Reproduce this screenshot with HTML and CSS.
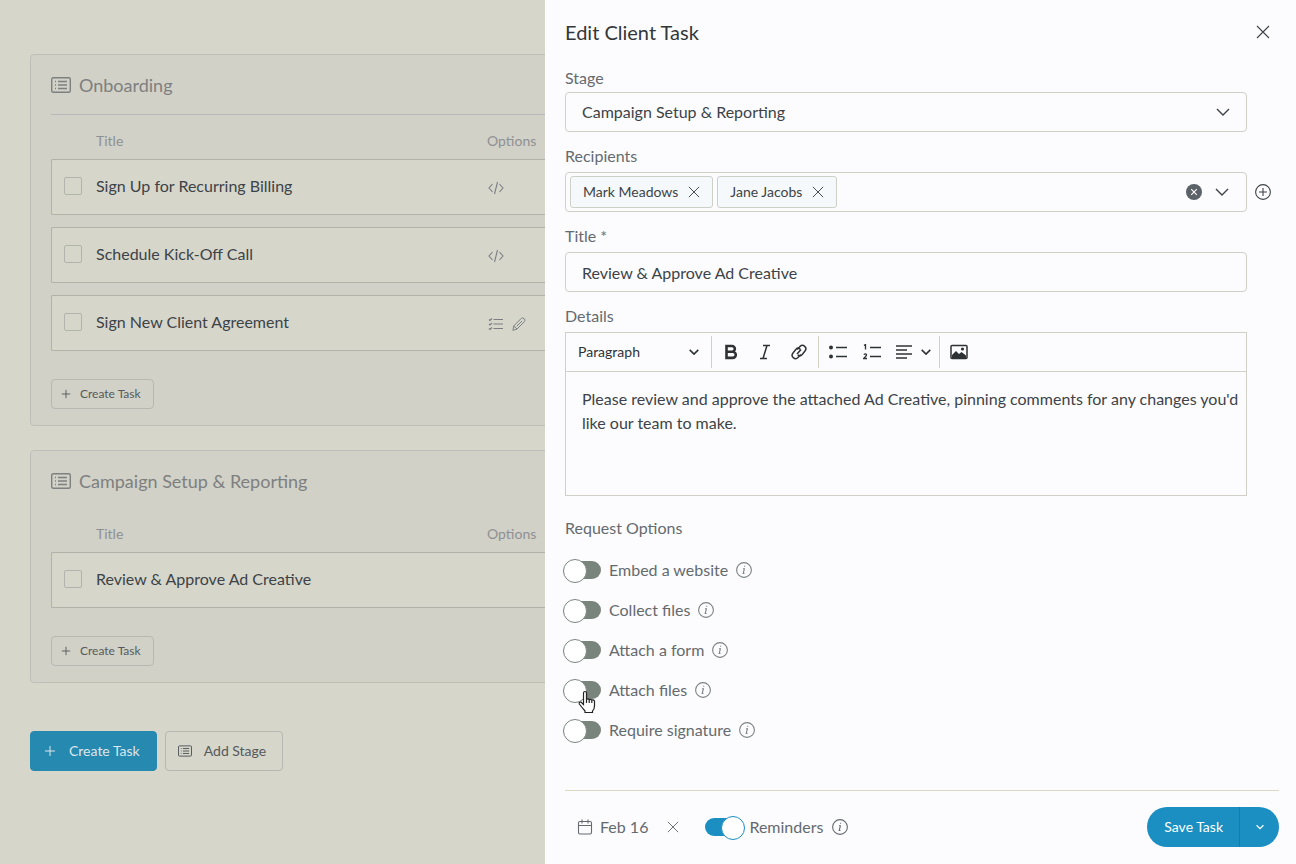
FILE: index.html
```html
<!DOCTYPE html>
<html lang="en">
<head>
    <meta charset="UTF-8">
    <meta name="viewport" content="width=device-width, initial-scale=1">
    <title>Edit Client Task</title>
    <link rel="stylesheet" href="styles.css">
</head>
<body>
<!-- shared icons -->
<svg class="sprite" aria-hidden="true">
    <symbol id="i-list" viewBox="0 0 20 16"><rect x="0.7" y="0.7" width="18.6" height="14.6" rx="1.5"/><path d="M4 4.5h1M7 4.5h9M4 8h1M7 8h9M4 11.5h1M7 11.5h9"/></symbol>
    <symbol id="i-code" viewBox="0 0 16 14"><path d="M4.5 3L1 7l3.500 4M11.500 3L15 7l-3.500 4M9.500 1l-3 12"/></symbol>
    <symbol id="i-checks" viewBox="0 0 16 14"><path d="M5.500 2.500H15M5.500 7H15M5.500 11.500H15M1 2.500l1 1 2-2M1 7l1 1 2-2M1 11.500l1 1 2-2"/></symbol>
    <symbol id="i-pen" viewBox="0 0 16 16"><path d="M1 15.200l1-5 8.500-8.500q1.700-1.400 3.500.2q1.600 1.700.2 3.400l-8.500 8.500zM2 10.200l3.700 3.600M11.500 4.500l-6 6"/></symbol>
    <symbol id="i-plus" viewBox="0 0 12 12"><path d="M6 1v10M1 6h10"/></symbol>
    <symbol id="i-x" viewBox="0 0 14 14"><path d="M1 1l12 12M13 1L1 13"/></symbol>
    <symbol id="i-down" viewBox="0 0 14 8"><path d="M1 1l6 6 6-6"/></symbol>
    <symbol id="i-info" viewBox="0 0 16 16"><circle cx="8" cy="8" r="7.400"/><path d="M7 6.800h1.400l-1.200 4.700h1.300M8.700 3.800v1"/></symbol>
</svg>

<main class="page">
    <section class="stage">
        <h2 class="stage-head"><svg class="icon icon-list"><use href="#i-list"/></svg>Onboarding</h2>
        <table class="tasks">
            <thead>
                <tr><th class="col-check"></th><th class="col-title">Title</th><th>Options</th></tr>
            </thead>
            <tbody>
                <tr>
                    <td><input class="check" type="checkbox" aria-label="Sign Up for Recurring Billing"></td>
                    <td>Sign Up for Recurring Billing</td>
                    <td><svg class="icon icon-opt"><use href="#i-code"/></svg></td>
                </tr>
                <tr>
                    <td><input class="check" type="checkbox" aria-label="Schedule Kick-Off Call"></td>
                    <td>Schedule Kick-Off Call</td>
                    <td><svg class="icon icon-opt"><use href="#i-code"/></svg></td>
                </tr>
                <tr>
                    <td><input class="check" type="checkbox" aria-label="Sign New Client Agreement"></td>
                    <td>Sign New Client Agreement</td>
                    <td><svg class="icon icon-opt"><use href="#i-checks"/></svg><svg class="icon icon-opt"><use href="#i-pen"/></svg></td>
                </tr>
            </tbody>
        </table>
        <button class="btn btn-small" type="button"><svg class="icon icon-plus"><use href="#i-plus"/></svg>Create Task</button>
    </section>

    <section class="stage stage-plain">
        <h2 class="stage-head"><svg class="icon icon-list"><use href="#i-list"/></svg>Campaign Setup &amp; Reporting</h2>
        <table class="tasks">
            <thead>
                <tr><th class="col-check"></th><th class="col-title">Title</th><th>Options</th></tr>
            </thead>
            <tbody>
                <tr>
                    <td><input class="check" type="checkbox" aria-label="Review and Approve Ad Creative"></td>
                    <td>Review &amp; Approve Ad Creative</td>
                    <td></td>
                </tr>
            </tbody>
        </table>
        <button class="btn btn-small" type="button"><svg class="icon icon-plus"><use href="#i-plus"/></svg>Create Task</button>
    </section>

    <div class="page-actions">
        <button class="btn btn-primary" type="button"><svg class="icon icon-stage"><use href="#i-plus"/></svg>Create Task</button>
        <button class="btn" type="button"><svg class="icon icon-stage"><use href="#i-list"/></svg>Add Stage</button>
    </div>
</main>

<form class="drawer">
    <header class="drawer-head">
        <h1>Edit Client Task</h1>
        <button class="icon-btn" type="button" aria-label="Close"><svg class="icon icon-x"><use href="#i-x"/></svg></button>
    </header>

    <div class="drawer-body">
        <label class="label" for="stage">Stage</label>
        <div class="row">
            <div class="select-wrap">
                <select class="input" id="stage">
                    <option>Campaign Setup &amp; Reporting</option>
                    <option>Onboarding</option>
                </select>
                <svg class="icon icon-down"><use href="#i-down"/></svg>
            </div>
        </div>

        <span class="label" id="rec-label">Recipients</span>
        <div class="row">
            <div class="tags" role="group" aria-labelledby="rec-label">
                <span class="tag">Mark Meadows<button class="icon-btn" type="button" aria-label="Remove Mark Meadows"><svg class="icon icon-tag-x"><use href="#i-x"/></svg></button></span>
                <span class="tag">Jane Jacobs<button class="icon-btn" type="button" aria-label="Remove Jane Jacobs"><svg class="icon icon-tag-x"><use href="#i-x"/></svg></button></span>
                <button class="icon-btn tags-clear" type="button" aria-label="Clear recipients">
                    <svg class="icon icon-16" viewBox="0 0 16 16"><circle class="disc" cx="8" cy="8" r="8"/><path class="cross" d="M5.200 5.200l5.600 5.600M10.800 5.200l-5.600 5.600"/></svg>
                </button>
                <button class="icon-btn" type="button" aria-label="Show recipients"><svg class="icon icon-down"><use href="#i-down"/></svg></button>
            </div>
            <button class="icon-btn" type="button" aria-label="Add recipient">
                <svg class="icon icon-16" viewBox="0 0 16 16"><circle cx="8" cy="8" r="7.400"/><path d="M8 4v8M4 8h8"/></svg>
            </button>
        </div>

        <label class="label" for="title">Title *</label>
        <div class="row">
            <input class="input" id="title" type="text" value="Review &amp; Approve Ad Creative">
        </div>

        <label class="label" for="details">Details</label>
        <div class="row">
            <div class="editor">
                <div class="toolbar">
                    <div class="tool-group">
                        <div class="select-wrap">
                            <select class="format" aria-label="Text style">
                                <option>Paragraph</option>
                                <option>Heading</option>
                            </select>
                            <svg class="icon icon-caret"><use href="#i-down"/></svg>
                        </div>
                    </div>
                    <div class="tool-group">
                        <button class="tool" type="button" aria-label="Bold"><svg viewBox="0 0 16 16"><path class="thick" d="M3.500 2h5.500a2.800 2.800 0 0 1 0 5.700H3.500zM3.500 7.700h6.200a3.100 3.100 0 0 1 0 6.200H3.500z"/></svg></button>
                        <button class="tool" type="button" aria-label="Italic"><svg viewBox="0 0 16 16"><path d="M6 1.500h7M3 14.500h7M10 1.500l-4 13"/></svg></button>
                        <button class="tool" type="button" aria-label="Link"><svg viewBox="0 0 16 16"><path d="M6 5.500l3-3a3.400 3.400 0 0 1 5 4.600l-3 3.600a3 3 0 0 1-4.200.2M10 10.500l-3 3a3.400 3.400 0 0 1-5-4.600l3-3.600a3 3 0 0 1 4.200-.2M6 10l4-4.500"/></svg></button>
                    </div>
                    <div class="tool-group">
                        <button class="tool" type="button" aria-label="Bulleted list"><svg viewBox="0 0 18 16"><path d="M7 3.500h11M7 12.500h11"/><circle class="dot" cx="2" cy="3.500" r="2"/><circle class="dot" cx="2" cy="12.500" r="2"/></svg></button>
                        <button class="tool" type="button" aria-label="Numbered list"><svg viewBox="0 0 18 16"><path d="M7 3.500h11M7 12.500h11"/><path class="fine" d="M1 1.500l1.500-1v5M.700 10.500q2.500-1.500 2.800.2q0 1-2.800 3.800h3.300"/></svg></button>
                        <button class="tool tool-wide" type="button" aria-label="Alignment"><svg viewBox="0 0 16 16"><path d="M0 2h16M0 6h11M0 10h16M0 14h11"/></svg><svg class="icon icon-caret"><use href="#i-down"/></svg></button>
                    </div>
                    <div class="tool-group">
                        <button class="tool" type="button" aria-label="Image"><svg viewBox="0 0 18 16"><rect x="1" y="1.500" width="16" height="13" rx="1"/><path class="dot" d="M2 13v-2l4-4 3 3 2.500-2 4.500 3.500V14H2z"/><circle class="dot" cx="12.500" cy="5" r="1.600"/></svg></button>
                    </div>
                </div>
                <textarea class="editor-text" id="details">Please review and approve the attached Ad Creative, pinning comments for any changes you'd like our team to make.</textarea>
            </div>
        </div>

        <fieldset class="options">
            <legend>Request Options</legend>
            <div class="option">
                <label class="switch-label"><input class="switch" type="checkbox">Embed a website</label>
                <svg class="icon icon-16"><use href="#i-info"/></svg>
            </div>
            <div class="option">
                <label class="switch-label"><input class="switch" type="checkbox">Collect files</label>
                <svg class="icon icon-16"><use href="#i-info"/></svg>
            </div>
            <div class="option">
                <label class="switch-label"><input class="switch" type="checkbox">Attach a form</label>
                <svg class="icon icon-16"><use href="#i-info"/></svg>
            </div>
            <div class="option">
                <label class="switch-label"><input class="switch" type="checkbox">Attach files</label>
                <svg class="icon icon-16"><use href="#i-info"/></svg>
                <svg class="pointer" viewBox="0 0 18 23" aria-hidden="true"><path d="M5.500 14V2.500a1.500 1.500 0 0 1 3 0V9q1.300-1.300 2.700.2q1.300-1 2.600.4q1.700-.8 2.700.9V15q0 4-2 5.500V22H7v-1.500Q4 17 1.300 13.500q-.6-2.300 1.700-1.900zM8.500 9v3.500M11.200 9.500v3M13.800 10v2.500"/></svg>
            </div>
            <div class="option">
                <label class="switch-label"><input class="switch" type="checkbox">Require signature</label>
                <svg class="icon icon-16"><use href="#i-info"/></svg>
            </div>
        </fieldset>
    </div>

    <footer class="drawer-foot">
        <button class="date" type="button">
            <svg class="icon icon-16" viewBox="0 0 16 16"><rect x="1.500" y="2.500" width="13" height="12.500" rx="1.500"/><path d="M1.500 6.500h13M5 .500v4M11 .500v4"/></svg>Feb 16
        </button>
        <button class="icon-btn date-clear" type="button" aria-label="Clear date"><svg class="icon icon-tag-x"><use href="#i-x"/></svg></button>
        <label class="switch-label"><input class="switch" type="checkbox" checked>Reminders</label>
        <svg class="icon icon-16"><use href="#i-info"/></svg>
        <div class="save">
            <button class="save-main" type="submit">Save Task</button>
            <button class="icon-btn save-more" type="button" aria-label="More save options"><svg class="icon icon-caret"><use href="#i-down"/></svg></button>
        </div>
    </footer>
</form>
</body>
</html>
```

FILE: styles.css
```css
*{
    box-sizing:border-box;
}
body{
    margin:0;
    min-height:100vh;
    font-family:Lato, "Liberation Sans", sans-serif;
    font-size:16px;
    line-height:24px;
    color:#3d4347;
    background:#d6d6cb;
}
button, input, select, textarea{
    margin:0;
    font:inherit;
    color:inherit;
}
button{
    padding:0;
    border:0;
    background:none;
    cursor:pointer;
}
.sprite{
    position:absolute;
    width:0;
    height:0;
}

/* icons */
.icon{
    flex:none;
    fill:none;
    stroke:currentColor;
    stroke-width:1.1;
}
.icon-list{
    width:20px;
    height:16px;
    stroke-width:1.4;
}
.icon-opt{
    width:16px;
    height:14px;
    margin:0 6px 0 1px;
    vertical-align:middle;
    color:#7c7e84;
}
.icon-plus{
    width:10px;
    height:10px;
}
.icon-stage{
    width:14px;
    height:12px;
    stroke-width:1.4;
}
.icon-16{
    width:16px;
    height:16px;
}
.icon-x{
    width:14px;
    height:14px;
}
.icon-tag-x{
    width:12px;
    height:12px;
}
.icon-down{
    width:14px;
    height:8px;
    stroke-width:1.4;
}
.icon-caret{
    width:10px;
    height:6px;
    stroke-width:2.2;
}
.disc{
    fill:#5b6268;
    stroke:none;
}
.cross{
    stroke:#fff;
}
.icon-btn{
    display:flex;
    align-items:center;
    justify-content:center;
}

/* page behind the drawer */
.page{
    padding:54px 30px;
}
.stage{
    margin-bottom:24px;
    padding:0 20px 16px;
    border:1px solid #bfbfba;
    border-radius:4px;
    background:#d1d1c7;
}
.stage-head{
    display:flex;
    align-items:center;
    gap:8px;
    height:60px;
    margin:0;
    border-bottom:1px solid #b8b8bc;
    font-size:18px;
    font-weight:400;
    color:#7e8080;
}
.stage-plain .stage-head{
    border-bottom-color:transparent;
}
.tasks{
    width:100%;
    table-layout:fixed;
    border-collapse:separate;
    border-spacing:0 12px;
}
.tasks th{
    padding:8px 0 0;
    font-size:14px;
    font-weight:400;
    line-height:12px;
    text-align:left;
    color:#8f9094;
}
.stage-plain .tasks th{
    padding-top:5px;
}
.tasks .col-check{
    width:45px;
}
.tasks .col-title{
    width:391px;
}
.tasks td{
    height:56px;
    padding:0 0 2px;
    border:solid #b2b2aa;
    border-width:1px 0;
    background:#d6d6cb;
}
.tasks td:first-child{
    padding-left:12px;
    border-left-width:1px;
    border-radius:2px 0 0 2px;
}
.tasks td:last-child{
    border-right-width:1px;
    border-radius:0 2px 2px 0;
}
.check{
    display:block;
    width:18px;
    height:18px;
    appearance:none;
    border:1px solid #b3b3ae;
    border-radius:2px;
}
.btn{
    display:flex;
    align-items:center;
    gap:12px;
    height:40px;
    padding:0 16px 0 12px;
    border:1px solid #b8b8b2;
    border-radius:4px;
    font-size:14px;
    color:#55595c;
}
.btn-small{
    gap:9px;
    height:30px;
    margin-top:16px;
    padding:0 12px 0 9px;
    font-size:12px;
}
.btn-primary{
    border-color:#2589b0;
    color:#dfe6ea;
    background:#2589b0;
}
.btn-primary .icon{
    stroke-width:1;
}
.page-actions{
    display:flex;
    gap:8px;
    padding-top:24px;
}

/* drawer */
.drawer{
    position:fixed;
    top:0;
    right:0;
    bottom:0;
    display:flex;
    flex-direction:column;
    width:calc(100% - 545px);
    padding:0 17px 0 20px;
    background:#fcfcfe;
}
.drawer-head{
    display:flex;
    align-items:center;
    justify-content:space-between;
    height:64px;
    padding-right:9px;
}
.drawer-head h1{
    margin:0;
    font-size:20px;
    font-weight:400;
    color:#33373a;
}
.drawer-body{
    flex:1;
}
.label{
    display:block;
    margin:12px 0 4px;
    color:#656a6e;
}
.label:first-child{
    margin:2px 0;
}
.row{
    display:grid;
    grid-template-columns:1fr 32px;
}
.input{
    display:block;
    width:100%;
    height:40px;
    padding:0 16px;
    appearance:none;
    border:1px solid #d0d0c6;
    border-radius:4px;
    background:transparent;
}
.select-wrap{
    position:relative;
}
.select-wrap .icon{
    position:absolute;
    top:0;
    right:17px;
    bottom:0;
    margin:auto 0;
    pointer-events:none;
}
.tags{
    display:flex;
    align-items:center;
    gap:4px;
    height:40px;
    padding:0 17px 0 4px;
    border:1px solid #d0d0c6;
    border-radius:4px;
}
.tag{
    display:flex;
    align-items:center;
    gap:10px;
    height:32px;
    padding:0 12px;
    border:1px solid #cdd0c6;
    border-radius:3px;
    font-size:14px;
    background:#f6f9fb;
}
.tags-clear{
    margin:0 9px 0 auto;
}

/* text editor */
.editor{
    border:1px solid #d0d0c6;
}
.toolbar{
    display:flex;
    align-items:center;
    height:39px;
    border-bottom:1px solid #d0d0c6;
    color:#2f3234;
}
.tool-group{
    display:flex;
    align-items:center;
    gap:2px;
    height:32px;
    padding:0 3px;
    border-left:1px solid #d0d0c6;
}
.tool-group:first-child{
    padding:0;
    border:0;
}
.tool{
    display:flex;
    align-items:center;
    justify-content:center;
    gap:8px;
    width:32px;
    height:32px;
}
.tool-wide{
    width:46px;
}
.tool svg{
    width:18px;
    height:16px;
    fill:none;
    stroke:currentColor;
    stroke-width:1.5;
}
.tool .icon-caret{
    width:10px;
    height:6px;
    stroke-width:2.2;
}
.tool .thick{
    stroke-width:2.6;
}
.tool .fine{
    stroke-width:1.3;
}
.tool .dot{
    fill:currentColor;
    stroke:none;
}
.format{
    display:block;
    width:145px;
    height:32px;
    padding:0 12px;
    appearance:none;
    border:0;
    font-size:14px;
    background:transparent;
}
.toolbar .select-wrap .icon{
    right:12px;
}
.editor-text{
    display:block;
    width:100%;
    height:123px;
    padding:15px 0 12px 16px;
    border:0;
    resize:none;
    background:transparent;
}

/* request options */
.options{
    margin:0;
    padding:20px 0 0;
    border:0;
    color:#656a6e;
}
.options legend{
    float:left;
    width:100%;
    margin-bottom:10px;
    padding:0;
}
.option{
    position:relative;
    display:flex;
    clear:both;
    align-items:center;
    gap:8px;
    height:40px;
}
.option .icon{
    color:#7d8284;
}
.switch-label{
    display:flex;
    align-items:center;
    gap:8px;
}
.switch{
    position:relative;
    width:36px;
    height:18px;
    appearance:none;
    border-radius:9px;
    background:#79847c;
}
.switch::before{
    content:'';
    position:absolute;
    top:-2px;
    left:-2px;
    width:22px;
    height:22px;
    border:1px solid #79847c;
    border-radius:50%;
    background:#fff;
}
.switch:checked{
    background:#1b8fc2;
}
.switch:checked::before{
    left:16px;
    border-color:#1b8fc2;
}
.pointer{
    position:absolute;
    top:20px;
    left:13px;
    width:18px;
    height:24px;
    fill:#fff;
    stroke:#222;
    stroke-width:1.2;
}

/* footer */
.drawer-foot{
    display:flex;
    align-items:center;
    height:74px;
    padding-bottom:2px;
    border-top:1px solid #dadac4;
    color:#656a6e;
}
.drawer-foot .switch-label{
    margin-right:9px;
}
.date{
    display:flex;
    align-items:center;
    gap:7px;
    padding-left:12px;
}
.date-clear{
    margin:0 26px 0 19px;
}
.save{
    display:flex;
    height:40px;
    margin-left:auto;
    overflow:hidden;
    border-radius:20px;
    font-size:14px;
    color:#fff;
    background:#1b8fc2;
}
.save-main{
    padding:0 16px 0 17px;
}
.save-more{
    width:40px;
    border-left:1px solid #187ba0;
}
.save-more .icon{
    width:8px;
}
```
